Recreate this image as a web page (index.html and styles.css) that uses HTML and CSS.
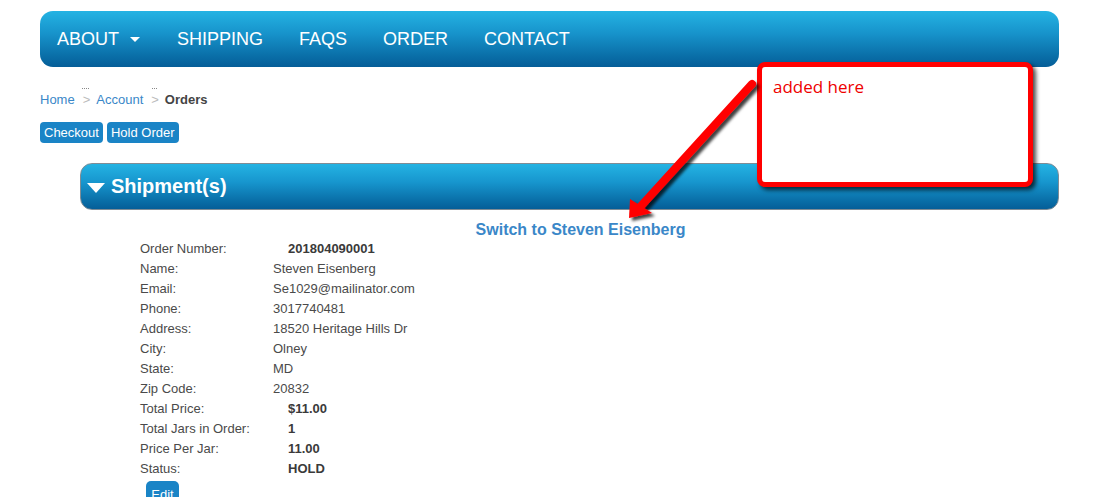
FILE: index.html
```html
<!DOCTYPE html>
<html>
<head>
<meta charset="utf-8">
<link rel="stylesheet" href="styles.css">
</head>
<body>
<div class="page">
  <nav class="topnav">
    <a class="nav-item">ABOUT <span class="caret"></span></a>
    <a class="nav-item">SHIPPING</a>
    <a class="nav-item">FAQS</a>
    <a class="nav-item">ORDER</a>
    <a class="nav-item">CONTACT</a>
  </nav>

  <div class="breadcrumb">
    <a class="crumb-link">Home</a>
    <span class="sep dots3">&gt;</span>
    <a class="crumb-link">Account</a>
    <span class="sep dots2">&gt;</span>
    <span class="crumb-current">Orders</span>
  </div>

  <div class="actions">
    <button class="btn">Checkout</button>
    <button class="btn">Hold Order</button>
  </div>

  <div class="section-bar">
    <span class="down-tri"></span>
    <span class="section-title">Shipment(s)</span>
  </div>

  <div class="switch-row"><a class="switch-link">Switch to Steven Eisenberg</a></div>

  <div class="details">
    <div class="row"><span class="label">Order Number:</span><span class="value strong">201804090001</span></div>
    <div class="row"><span class="label">Name:</span><span class="value">Steven Eisenberg</span></div>
    <div class="row"><span class="label">Email:</span><span class="value">Se1029@mailinator.com</span></div>
    <div class="row"><span class="label">Phone:</span><span class="value">3017740481</span></div>
    <div class="row"><span class="label">Address:</span><span class="value">18520 Heritage Hills Dr</span></div>
    <div class="row"><span class="label">City:</span><span class="value">Olney</span></div>
    <div class="row"><span class="label">State:</span><span class="value">MD</span></div>
    <div class="row"><span class="label">Zip Code:</span><span class="value">20832</span></div>
    <div class="row"><span class="label">Total Price:</span><span class="value strong">$11.00</span></div>
    <div class="row"><span class="label">Total Jars in Order:</span><span class="value strong">1</span></div>
    <div class="row"><span class="label">Price Per Jar:</span><span class="value strong">11.00</span></div>
    <div class="row"><span class="label">Status:</span><span class="value strong">HOLD</span></div>
  </div>
  <div class="edit-wrap"><button class="btn edit-btn">Edit</button></div>

  <div class="note-box">added here</div>
  <svg class="note-arrow" width="1093" height="497" viewBox="0 0 1093 497">
    <defs>
      <filter id="sh" x="-20%" y="-20%" width="140%" height="140%">
        <feDropShadow dx="3" dy="3" stdDeviation="1.6" flood-color="#000" flood-opacity="0.75"/>
      </filter>
    </defs>
    <g filter="url(#sh)">
      <line x1="752" y1="84" x2="641" y2="206" stroke="#ff0000" stroke-width="8" stroke-linecap="round"/>
      <polygon points="629,218 630,199 652,213" fill="#ff0000"/>
    </g>
  </svg>
</div>
</body>
</html>
```

FILE: styles.css
```css
* { box-sizing: border-box; }
html, body { margin: 0; padding: 0; background: #fff; }
body {
  font-family: "Liberation Sans", Arial, sans-serif;
  width: 1093px;
  height: 497px;
  overflow: hidden;
}
.page {
  position: relative;
  width: 1093px;
  height: 497px;
  padding-top: 11px;
}
.topnav {
  margin-left: 40px;
  width: 1019px;
  height: 56px;
  border-radius: 13px;
  background: linear-gradient(to bottom, #24b3e3 0%, #1793cb 40%, #0a6fa8 80%, #055e98 100%);
  display: flex;
  align-items: center;
  padding-left: 17px;
}
.nav-item {
  color: #fff;
  font-size: 18px;
  line-height: 56px;
  padding-right: 36px;
  display: flex;
  align-items: center;
}
.caret {
  display: inline-block;
  width: 0;
  height: 0;
  border-left: 5px solid transparent;
  border-right: 5px solid transparent;
  border-top: 5px solid #fff;
  margin-left: 11px;
  margin-right: 1px;
  margin-top: 1px;
}
.breadcrumb {
  margin-top: 25px;
  margin-left: 40px;
  font-size: 13px;
  line-height: 16px;
  height: 16px;
  display: flex;
}
.crumb-link { color: #3a87c8; }
.crumb-current { color: #444; font-weight: bold; }
.sep {
  color: #bbb;
  margin: 0 6px 0 8px;
  position: relative;
}
.sep::before {
  content: "";
  position: absolute;
  top: -4px;
  left: -1px;
  width: 7px;
  border-top: 1px dotted #888;
}
.dots2::before { width: 5px; left: 1px; }
.actions {
  margin-top: 14px;
  margin-left: 40px;
  display: flex;
  gap: 4px;
  height: 21px;
}
.btn {
  font-family: "Liberation Sans", Arial, sans-serif;
  font-size: 13px;
  color: #fff;
  background: #1a84c6;
  border: none;
  border-radius: 4px;
  height: 21px;
  padding: 0 4px;
  line-height: 21px;
}
.section-bar {
  margin-top: 20px;
  margin-left: 80px;
  width: 979px;
  height: 47px;
  border: 1px solid #7f8c96;
  border-radius: 12px;
  background: linear-gradient(to bottom, #24b3e3 0%, #1796ce 40%, #0a70a9 80%, #055e98 100%);
  display: flex;
  align-items: center;
  padding-left: 6px;
}
.down-tri {
  width: 0;
  height: 0;
  border-left: 9px solid transparent;
  border-right: 9px solid transparent;
  border-top: 10px solid #fff;
  margin-right: 6px;
  margin-top: 2px;
}
.section-title {
  color: #fff;
  font-weight: bold;
  font-size: 20px;
}
.switch-row {
  margin-top: 10px;
  margin-left: 80px;
  width: 1001px;
  text-align: center;
  line-height: 19px;
  height: 19px;
}
.switch-link {
  color: #3a87c8;
  font-weight: bold;
  font-size: 16px;
}
.details {
  margin-left: 140px;
  font-size: 13px;
  color: #4a4a4a;
}
.row {
  display: flex;
  line-height: 20px;
  height: 20px;
}
.label { width: 133px; }
.value.strong { padding-left: 15px; font-weight: bold; color: #3a3a3a; }
.edit-wrap { margin-left: 146px; margin-top: 2px; }
.edit-btn { width: 33px; padding: 0; height: 26px; border-radius: 5px; font-size: 13px; }

.note-box {
  position: absolute;
  left: 757px;
  top: 62px;
  width: 276px;
  height: 125px;
  border: 5px solid #ff0000;
  border-radius: 8px;
  background: #fff;
  box-shadow: 3px 3px 4px rgba(0,0,0,0.7);
  color: #ee0000;
  font-family: "Open Sans", "Noto Sans", sans-serif;
  font-size: 17px;
  padding: 10px 0 0 11px;
  line-height: 20px;
}
.note-arrow {
  position: absolute;
  left: 0;
  top: 0;
  pointer-events: none;
}
```
